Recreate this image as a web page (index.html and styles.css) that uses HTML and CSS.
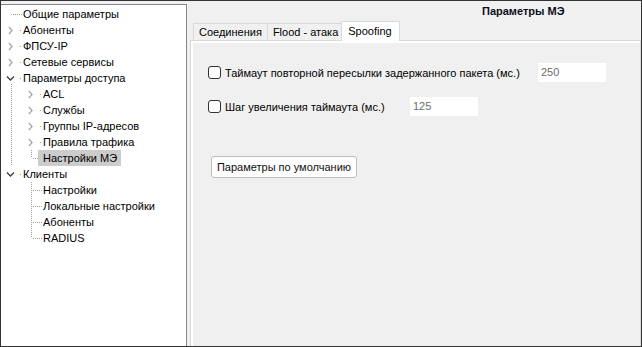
FILE: index.html
```html
<!DOCTYPE html>
<html lang="ru">
<head>
<meta charset="utf-8">
<title>Параметры МЭ</title>
<link rel="stylesheet" href="styles.css">
</head>
<body>
<div class="window">
  <div class="tree">
    <div class="row"><span class="cell"><svg width="20" height="16"><path class="dot" d="M9 8.5H20"/></svg></span><span class="label">Общие параметры</span></div>
    <div class="row"><span class="cell"><svg width="20" height="16"><path class="chev-c" d="M7 5L10 8.5L7 12"/><path class="dot" d="M18 8.5H19"/></svg></span><span class="label">Абоненты</span></div>
    <div class="row"><span class="cell"><svg width="20" height="16"><path class="chev-c" d="M7 5L10 8.5L7 12"/><path class="dot" d="M18 8.5H19"/></svg></span><span class="label">ФПСУ-IP</span></div>
    <div class="row"><span class="cell"><svg width="20" height="16"><path class="chev-c" d="M7 5L10 8.5L7 12"/><path class="dot" d="M18 8.5H19"/></svg></span><span class="label">Сетевые сервисы</span></div>
    <div class="row"><span class="cell"><svg width="20" height="16"><path class="chev-e" d="M5 6.5L8.5 10L12 6.5"/><path class="dot" d="M18 8.5H19"/><path class="dot" d="M9.5 14V16"/></svg></span><span class="label">Параметры доступа</span></div>
    <div class="row"><span class="cell"><svg width="20" height="16"><path class="dot" d="M9.5 0V16"/></svg></span><span class="cell"><svg width="20" height="16"><path class="chev-c" d="M7 5L10 8.5L7 12"/><path class="dot" d="M18 8.5H19"/></svg></span><span class="label">ACL</span></div>
    <div class="row"><span class="cell"><svg width="20" height="16"><path class="dot" d="M9.5 0V16"/></svg></span><span class="cell"><svg width="20" height="16"><path class="chev-c" d="M7 5L10 8.5L7 12"/><path class="dot" d="M18 8.5H19"/></svg></span><span class="label">Службы</span></div>
    <div class="row"><span class="cell"><svg width="20" height="16"><path class="dot" d="M9.5 0V16"/></svg></span><span class="cell"><svg width="20" height="16"><path class="chev-c" d="M7 5L10 8.5L7 12"/><path class="dot" d="M18 8.5H19"/></svg></span><span class="label">Группы IP-адресов</span></div>
    <div class="row"><span class="cell"><svg width="20" height="16"><path class="dot" d="M9.5 0V16"/></svg></span><span class="cell"><svg width="20" height="16"><path class="chev-c" d="M7 5L10 8.5L7 12"/><path class="dot" d="M18 8.5H19"/></svg></span><span class="label">Правила трафика</span></div>
    <div class="row"><span class="cell"><svg width="20" height="16"><path class="dot" d="M9.5 0V16"/></svg></span><span class="cell"><svg width="20" height="16"><path class="dot" d="M9.5 0V8"/><path class="dot" d="M11 8.5H20"/></svg></span><span class="label selected">Настройки МЭ</span></div>
    <div class="row"><span class="cell"><svg width="20" height="16"><path class="chev-e" d="M5 6.5L8.5 10L12 6.5"/><path class="dot" d="M18 8.5H19"/></svg></span><span class="label">Клиенты</span></div>
    <div class="row"><span class="cell"></span><span class="cell"><svg width="20" height="16"><path class="dot" d="M9.5 0V16"/><path class="dot" d="M11 8.5H20"/></svg></span><span class="label">Настройки</span></div>
    <div class="row"><span class="cell"></span><span class="cell"><svg width="20" height="16"><path class="dot" d="M9.5 0V16"/><path class="dot" d="M11 8.5H20"/></svg></span><span class="label">Локальные настройки</span></div>
    <div class="row"><span class="cell"></span><span class="cell"><svg width="20" height="16"><path class="dot" d="M9.5 0V16"/><path class="dot" d="M11 8.5H20"/></svg></span><span class="label">Абоненты</span></div>
    <div class="row"><span class="cell"></span><span class="cell"><svg width="20" height="16"><path class="dot" d="M9.5 0V8"/><path class="dot" d="M11 8.5H20"/></svg></span><span class="label">RADIUS</span></div>
  </div>
  <div class="main">
    <div class="title">Параметры МЭ</div>
    <div class="tabs">
      <div class="tab">Соединения</div>
      <div class="tab">Flood - атака</div>
      <div class="tab active">Spoofing</div>
    </div>
    <div class="pane">
      <div class="pane-inner">
        <div class="opt opt-first">
          <span class="box"></span>
          <span class="lbl lbl-long">Таймаут повторной пересылки задержанного пакета (мс.)</span>
          <span class="field">250</span>
        </div>
        <div class="opt opt-second">
          <span class="box"></span>
          <span class="lbl lbl-short">Шаг увеличения таймаута (мс.)</span>
          <span class="field">125</span>
        </div>
        <div class="btn">Параметры по умолчанию</div>
      </div>
    </div>
  </div>
</div>
</body>
</html>
```
FILE: styles.css
```css
* { box-sizing: border-box; }
html, body { margin: 0; padding: 0; }
body {
  font-family: "Liberation Sans", Arial, sans-serif;
  font-size: 11px;
  color: #000;
  background: #f0f0f0;
}
.window {
  width: 642px;
  height: 347px;
  border: 1px solid #333;
  background: #f0f0f0;
  display: flex;
  overflow: hidden;
}
.tree {
  width: 186px;
  margin-top: 3px;
  background: #fff;
  border-top: 1px solid #828790;
  border-right: 1px solid #828790;
  padding: 1px 0 0 1px;
}
.row {
  display: flex;
  height: 16px;
  line-height: 16px;
  white-space: nowrap;
}
.cell {
  width: 20px;
  height: 16px;
  flex: none;
}
.cell svg { display: block; }
.dot {
  fill: none;
  stroke: #a0a0a0;
  stroke-width: 1;
  stroke-dasharray: 1 1;
}
.chev-c {
  fill: none;
  stroke: #a6a6a6;
  stroke-width: 1.3;
}
.chev-e {
  fill: none;
  stroke: #3c3c3c;
  stroke-width: 1.3;
}
.label {
  margin-left: -4px;
  padding: 0 4px 0 5px;
  height: 16px;
}
.label.selected {
  background: #cccccc;
}
.main {
  flex: 1;
  display: flex;
  flex-direction: column;
  padding-left: 3px;
}
.title {
  height: 20px;
  line-height: 20px;
  font-weight: bold;
  padding-left: 292px;
  color: #0d0d1a;
}
.tabs {
  display: flex;
  align-items: flex-end;
  height: 19px;
  padding-left: 3px;
  position: relative;
  z-index: 1;
}
.tab {
  height: 17px;
  line-height: 16px;
  padding: 0 5px 0 5px;
  border: 1px solid #d9d9d9;
  border-bottom: none;
  background: #f0f0f0;
  margin-right: -1px;
}
.tab.active {
  height: 20px;
  margin: 0 -2px -1px -2px;
  padding: 0 7px 0 6px;
  line-height: 18px;
  background: #fff;
}
.pane {
  flex: 1;
  border: 1px solid #d9d9d9;
  border-bottom: none;
  background: #fff;
  padding: 2px 0 0 2px;
  display: flex;
}
.pane-inner {
  flex: 1;
  background: #f0f0f0;
  display: flex;
  flex-direction: column;
  align-items: flex-start;
}
.opt {
  display: flex;
  align-items: center;
  height: 19px;
  margin-left: 15px;
}
.opt-first { margin-top: 20px; }
.opt-second { margin-top: 15px; }
.box {
  width: 13px;
  height: 13px;
  border: 1px solid #333;
  border-radius: 3px;
  background: #fff;
  margin-right: 4px;
  flex: none;
}
.lbl { white-space: nowrap; }
.lbl-long { width: 313px; }
.lbl-short { width: 185px; }
.field {
  width: 68px;
  height: 19px;
  line-height: 19px;
  background: #fff;
  color: #6d6d6d;
  padding-left: 3px;
}
.btn {
  margin-top: 40px;
  margin-left: 18px;
  width: 146px;
  height: 22px;
  line-height: 20px;
  text-align: center;
  border: 1px solid #bdbdbd;
  border-radius: 3px;
  background: #fdfdfd;
  color: #111;
}
```
